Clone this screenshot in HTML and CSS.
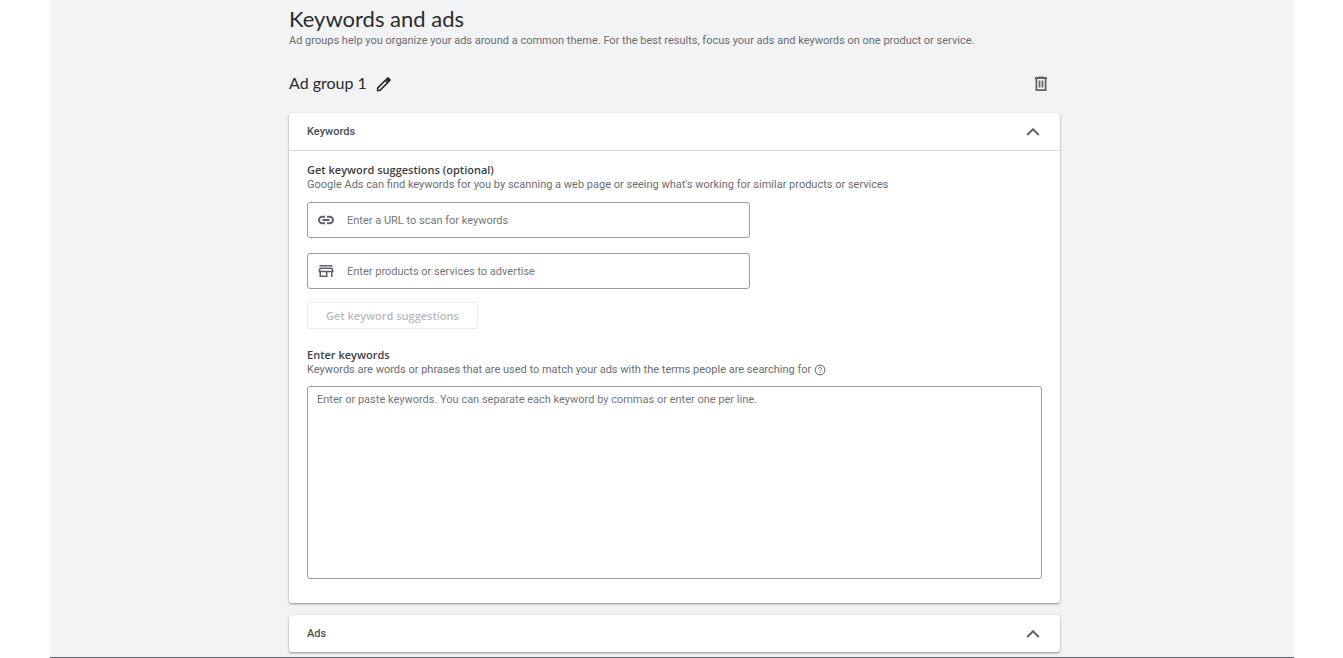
FILE: index.html
```html
<!DOCTYPE html>
<html lang="en">
<head>
<meta charset="utf-8">
<meta name="viewport" content="width=device-width, initial-scale=1">
<title>Keywords and ads</title>
<link rel="stylesheet" href="styles.css">
</head>
<body>
<main class="page">
  <header class="intro">
    <h1 class="title">Keywords and ads</h1>
    <p class="text">Ad groups help you organize your ads around a common theme. For the best results, focus your ads and keywords on one product or service.</p>
  </header>

  <div class="group">
    <h2 class="group-name">Ad group 1</h2>
    <button class="icon-button" type="button" aria-label="Rename ad group">
      <svg class="icon icon-edit" viewBox="0 0 18 18"><path fill-rule="evenodd" d="M1 13 11.500 2.500 15.500 6.500 5 17H1ZM2.800 13.800v1.400h1.400l8.600-8.600-1.400-1.400ZM11.300 2.700l2-2a1.400 1.400 0 0 1 2 0l2 2a1.400 1.400 0 0 1 0 2l-2 2Z"/></svg>
    </button>
    <button class="icon-button group-delete" type="button" aria-label="Delete ad group">
      <svg class="icon icon-delete" viewBox="0 0 14 16"><path fill-rule="evenodd" d="M4.500 1V0.500h5V1H13v2h-.5V15h-11V3H1V1ZM3.300 3v10.200h7.400V3ZM4.700 4.500h1.700v7H4.700ZM7.600 4.500h1.700v7H7.600Z"/></svg>
    </button>
  </div>

  <section class="card">
    <div class="card-header">
      <h3 class="card-title">Keywords</h3>
      <button class="icon-button" type="button" aria-label="Collapse keywords">
        <svg class="icon icon-chevron" viewBox="0 0 14 8"><path d="M1.200 7 7 1.300 12.800 7"/></svg>
      </button>
    </div>
    <div class="card-body">
      <h4 class="subtitle">Get keyword suggestions (optional)</h4>
      <p class="text">Google Ads can find keywords for you by scanning a web page or seeing what's working for similar products or services</p>
      <div class="fields">
        <label class="field">
          <svg class="icon icon-link" viewBox="0 0 16 10"><path d="M7 1.800H4.200a3.200 3.200 0 0 0 0 6.400H7M9 1.800h2.800a3.200 3.200 0 0 1 0 6.400H9M4.500 5h7"/></svg>
          <input class="field-input" type="url" aria-label="URL to scan" placeholder="Enter a URL to scan for keywords">
        </label>
        <label class="field">
          <svg class="icon icon-store" viewBox="0 0 16 14"><path fill-rule="evenodd" d="M1.500 1h13v1.500h-13ZM1.500 3.500h13l1 3.200V8.200h-1V13H13V8.200H9.500V13h-8V8.200h-1V6.700ZM2.700 5l-.5 1.700h11.600L13.300 5ZM3 8.200v3.300h5V8.200Z"/></svg>
          <input class="field-input" type="text" aria-label="Products or services" placeholder="Enter products or services to advertise">
        </label>
      </div>
      <button class="suggest" type="button" disabled>Get keyword suggestions</button>
      <h4 class="subtitle">Enter keywords</h4>
      <p class="text text-help">Keywords are words or phrases that are used to match your ads with the terms people are searching for
        <svg class="icon icon-help" viewBox="0 0 12 12"><circle cx="6" cy="6" r="4.900"/><path d="M4.500 4.900a1.500 1.500 0 1 1 2.400 1.200Q6 6.600 6 7.300M6 8.200v1"/></svg>
      </p>
      <textarea class="keywords" aria-label="Keywords" placeholder="Enter or paste keywords. You can separate each keyword by commas or enter one per line."></textarea>
    </div>
  </section>

  <section class="card">
    <div class="card-header">
      <h3 class="card-title">Ads</h3>
      <button class="icon-button" type="button" aria-label="Collapse ads">
        <svg class="icon icon-chevron" viewBox="0 0 14 8"><path d="M1.200 7 7 1.300 12.800 7"/></svg>
      </button>
    </div>
  </section>
</main>
</body>
</html>
```
FILE: styles.css
```css
* {
  box-sizing: border-box;
}

body {
  margin: 0;
  background: #fff;
  color: #5f6368;
  font: 11px/15px Roboto, sans-serif;
}

h1, h2, h3, h4, p {
  margin: 0;
}

.page {
  display: flow-root;
  margin: 0 49px 0 50px;
  padding: 7px 234px 5px 239px;
  background: #f1f3f4;
  border-bottom: 1px solid #5f6368;
}

.title {
  color: #2a2b2e;
  font: 400 22px/24px Lato, sans-serif;
}

.intro .text {
  margin-top: 2px;
}

.text {
  color: #6b6e72;
}

.group {
  display: flex;
  align-items: center;
  gap: 9px;
  margin: 24px 0 17px;
  padding-right: 12px;
}

.group-name {
  padding-bottom: 2px;
  color: #2a2b2e;
  font: 400 16px/22px Lato, sans-serif;
}

.group-delete {
  margin-left: auto;
}

.icon-button {
  display: flex;
  padding: 0;
  border: 0;
  background: none;
  cursor: pointer;
}

.icon {
  flex: none;
  fill: #5f6368;
}

.icon-edit {
  width: 15px;
  height: 15px;
  fill: #202124;
}

.icon-delete {
  width: 14px;
  height: 16px;
}

.icon-chevron {
  width: 14px;
  height: 8px;
  fill: none;
  stroke: #5f6368;
  stroke-width: 2;
}

.card {
  background: #fff;
  border-radius: 3px;
  box-shadow: 0 1px 2px rgba(60, 64, 67, .4), 0 1px 3px rgba(60, 64, 67, .2);
}

.card + .card {
  margin-top: 12px;
}

.card-header {
  display: flex;
  align-items: center;
  justify-content: space-between;
  height: 37px;
  padding: 0 20px 0 18px;
}

.card-title {
  color: #4b4e52;
  font: 500 11px/15px Roboto, sans-serif;
}

.card-body {
  padding: 11px 18px 24px;
  border-top: 1px solid #dadce0;
}

.subtitle {
  color: #3c4043;
  font: 600 11px/15px "Open Sans", sans-serif;
}

.fields {
  display: grid;
  gap: 15px;
  max-width: 443px;
  margin: 10px 0 13px;
}

.field {
  display: flex;
  align-items: center;
  gap: 13px;
  height: 36px;
  padding: 0 10px;
  border: 1px solid #9b9da0;
  border-radius: 3px;
}

.icon-link {
  width: 16px;
  height: 10px;
  fill: none;
  stroke: #5f6368;
  stroke-width: 2;
}

.icon-store {
  width: 16px;
  height: 14px;
}

.field-input {
  flex: 1;
  min-width: 0;
  height: 16px;
  padding: 1px 0 0;
  border: 0;
  outline: 0;
  background: none;
  color: #202124;
  font: inherit;
}

::placeholder {
  color: #74777a;
  opacity: 1;
}

.suggest {
  display: block;
  height: 27px;
  margin-bottom: 18px;
  padding: 0 18px;
  border: 1px solid #ececed;
  border-radius: 2px;
  background: #fff;
  color: #b9bbbd;
  font: 600 11px/15px "Open Sans", sans-serif;
}

.text-help {
  display: flex;
  align-items: center;
  gap: 3px;
}

.icon-help {
  width: 12px;
  height: 12px;
  fill: none;
  stroke: #5f6368;
}

.keywords {
  display: block;
  width: 100%;
  height: 193px;
  margin-top: 9px;
  padding: 5px 9px;
  border: 1px solid #9b9da0;
  border-radius: 3px;
  outline: 0;
  background: #fff;
  color: #202124;
  font: inherit;
  resize: none;
}
```
